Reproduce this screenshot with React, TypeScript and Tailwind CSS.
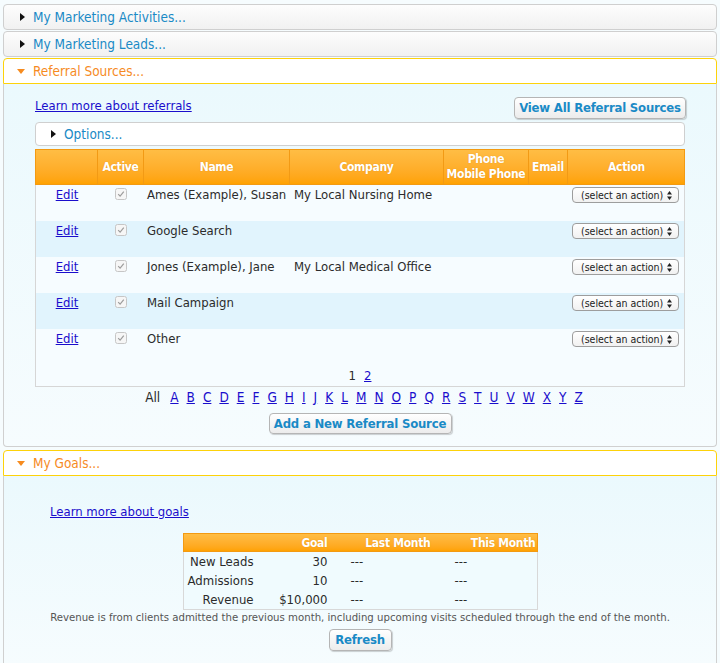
import React from 'react'

const FONT = "font-['DejaVu_Sans_Condensed','DejaVu_Sans',sans-serif]"

const rows = [
    { name: 'Ames (Example), Susan', company: 'My Local Nursing Home' },
    { name: 'Google Search', company: '' },
    { name: 'Jones (Example), Jane', company: 'My Local Medical Office' },
    { name: 'Mail Campaign', company: '' },
    { name: 'Other', company: '' },
]

const letters = 'ABCDEFGHIJKLMNOPQRSTUVWXYZ'.split('')

const goals = [
    { label: 'New Leads', goal: '30' },
    { label: 'Admissions', goal: '10' },
    { label: 'Revenue', goal: '$10,000' },
]

function ArrowRight() {
    return (
        <svg width="5" height="8" viewBox="0 0 5 8" className="shrink-0">
            <polygon points="0,0 5,4 0,8" fill="#111" />
        </svg>
    )
}

function ArrowDown() {
    return (
        <svg width="8" height="5" viewBox="0 0 8 5" className="shrink-0">
            <polygon points="0,0 8,0 4,5" fill="#f68b1f" />
        </svg>
    )
}

function ClosedHeader({ title, className = '' }: { title: string; className?: string }) {
    return (
        <div
            className={`flex h-[26px] items-center gap-[8px] rounded-[4px] border border-[#cfcfcf] bg-gradient-to-b from-[#fdfdfd] to-[#f1f1f1] pl-[16px] text-[13.5px] text-[#1a8ac6] ${className}`}
        >
            <ArrowRight />
            <span>{title}</span>
        </div>
    )
}

function OpenHeader({ title }: { title: string }) {
    return (
        <div className="flex h-[26px] items-center gap-[8px] rounded-t-[4px] border border-[#fdd20a] bg-white pl-[13px] text-[13.5px] text-[#f68b1f]">
            <ArrowDown />
            <span>{title}</span>
        </div>
    )
}

function Button({ label, className = '' }: { label: string; className?: string }) {
    return (
        <div
            className={`flex items-center justify-center whitespace-nowrap rounded-[4px] border border-[#b5b5b5] bg-gradient-to-b from-white to-[#ececec] text-[13px] font-bold tracking-[-0.2px] text-[#1a8ac6] shadow-[1px_1px_1px_rgba(0,0,0,0.18)] ${className}`}
        >
            {label}
        </div>
    )
}

function Check() {
    return (
        <svg width="12" height="12" viewBox="0 0 12 12">
            <rect x="0.5" y="0.5" width="11" height="11" rx="2" fill="#f6f6f6" stroke="#c6c6c6" />
            <path d="M3.2 6.2 L5.1 8.2 L8.8 3.6" fill="none" stroke="#9c9c9c" strokeWidth="1.2" />
        </svg>
    )
}

function ActionSelect() {
    return (
        <div className="flex h-[16px] w-[107px] items-center justify-between whitespace-nowrap rounded-[4px] border border-[#9d9d9d] bg-gradient-to-b from-white to-[#f1f1f1] pl-[8px] pr-[6px] text-[10.5px] leading-none text-[#222]">
            <span>(select an action)</span>
            <svg width="5" height="9" viewBox="0 0 5 9" className="shrink-0">
                <polygon points="2.5,0 5,3.5 0,3.5" fill="#222" />
                <polygon points="0,5.5 5,5.5 2.5,9" fill="#222" />
            </svg>
        </div>
    )
}

const cols = 'grid grid-cols-[62px_46px_146px_154px_85px_39px_117px]'
const th = 'flex items-center justify-center border-r border-[#f29a14]'

export default function App() {
    return (
        <div className={`${FONT} min-h-[663px] w-[720px] bg-[#f6fcfe] px-[3px] pt-[4px] text-[13px] text-[#2b2b2b]`}>
            <ClosedHeader title="My Marketing Activities..." />
            <ClosedHeader title="My Marketing Leads..." className="mt-[1px]" />

            <div className="mt-[1px]">
                <OpenHeader title="Referral Sources..." />
                <div className="rounded-b-[4px] border-x border-b border-[#d0d0d0] bg-gradient-to-b from-[#ebf9fd] to-[#f6fcfe] px-[31px] pb-[12px] pt-[13px]">
                    <div className="flex items-start justify-between">
                        <a href="#" className="-mt-[1px] text-[#1a0dcc] underline">
                            Learn more about referrals
                        </a>
                        <Button label="View All Referral Sources" className="-mr-[1px] h-[22px] w-[172px]" />
                    </div>

                    <div className="mt-[3px] flex h-[24px] items-center gap-[8px] rounded-[4px] border border-[#cfcfcf] bg-white pl-[15px] text-[13.5px] text-[#1a8ac6]">
                        <ArrowRight />
                        <span>Options...</span>
                    </div>

                    <div className="mt-[3px] w-[650px]">
                        <div
                            className={`${cols} h-[36px] whitespace-nowrap border border-[#f39a12] bg-gradient-to-b from-[#ffbd44] to-[#ffa200] text-[12px] font-bold leading-[15px] tracking-[-0.3px] text-white [text-shadow:0_0_1px_rgba(190,110,0,0.5)]`}
                        >
                            <div className="border-r border-[#f29a14]" />
                            <div className={th}>Active</div>
                            <div className={th}>Name</div>
                            <div className={th}>Company</div>
                            <div className={`${th} flex-col`}>
                                <span>Phone</span>
                                <span>Mobile Phone</span>
                            </div>
                            <div className={th}>Email</div>
                            <div className="flex items-center justify-center">Action</div>
                        </div>
                        <div className="border-x border-b border-[#d6d6d6] bg-[#f6fcff]">
                            {rows.map((r, i) => (
                                <div
                                    key={r.name}
                                    className={`${cols} h-[36px] ${i % 2 === 1 ? 'bg-[#e1f4fd]' : 'bg-[#f6fcff]'}`}
                                >
                                    <div className="text-center">
                                        <a href="#" className="text-[#1a0dcc] underline">
                                            Edit
                                        </a>
                                    </div>
                                    <div className="flex justify-center pt-[3px]">
                                        <Check />
                                    </div>
                                    <div className="pl-[3px]">{r.name}</div>
                                    <div className="pl-[4px]">{r.company}</div>
                                    <div />
                                    <div />
                                    <div className="pl-[4px] pt-[2px]">
                                        <ActionSelect />
                                    </div>
                                </div>
                            ))}
                            <div className="flex h-[21px] items-center justify-center gap-[8px]">
                                <span>1</span>
                                <a href="#" className="text-[#1a0dcc] underline">
                                    2
                                </a>
                            </div>
                        </div>
                    </div>

                    <div className="flex justify-center gap-[8px] pl-[8px] text-[13.5px]">
                        <span className="mr-[2px]">All</span>
                        {letters.map(l => (
                            <a key={l} href="#" className="text-[#1a0dcc] underline">
                                {l}
                            </a>
                        ))}
                    </div>

                    <div className="mt-[6px] flex justify-center">
                        <Button label="Add a New Referral Source" className="h-[21px] w-[183px]" />
                    </div>
                </div>
            </div>

            <div className="mt-[3px]">
                <OpenHeader title="My Goals..." />
                <div className="min-h-[190px] border-x border-[#d0d0d0] bg-gradient-to-b from-[#ebf9fd] to-[#f6fcfe] pt-[26px]">
                    <a href="#" className="ml-[46px] text-[#1a0dcc] underline">
                        Learn more about goals
                    </a>

                    <div className="mx-auto mt-[11px] w-[355px]">
                        <div className="grid h-[19px] grid-cols-[73px_74px_103px_105px] items-center whitespace-nowrap border border-[#f39a12] bg-gradient-to-b from-[#ffbd44] to-[#ffa200] text-[12px] font-bold tracking-[-0.3px] text-white [text-shadow:0_0_1px_rgba(190,110,0,0.5)]">
                            <div />
                            <div className="pr-[3px] text-right">Goal</div>
                            <div className="pr-[3px] text-right">Last Month</div>
                            <div className="pr-[3px] text-right">This Month</div>
                        </div>
                        <div className="border-x border-b border-[#d8d8d8] bg-[#f0fbfe]">
                            {goals.map(g => (
                                <div
                                    key={g.label}
                                    className="grid h-[19px] grid-cols-[73px_74px_103px_105px] items-center"
                                >
                                    <div className="pr-[3px] text-right">{g.label}</div>
                                    <div className="pr-[3px] text-right">{g.goal}</div>
                                    <div className="pl-[20px]">---</div>
                                    <div className="pl-[21px]">---</div>
                                </div>
                            ))}
                        </div>
                    </div>

                    <div className="text-center text-[11.3px] text-[#555]">
                        Revenue is from clients admitted the previous month, including upcoming visits scheduled through the end of the month.
                    </div>

                    <div className="mt-[2px] flex justify-center">
                        <Button label="Refresh" className="h-[22px] w-[63px]" />
                    </div>
                </div>
            </div>
        </div>
    )
}
